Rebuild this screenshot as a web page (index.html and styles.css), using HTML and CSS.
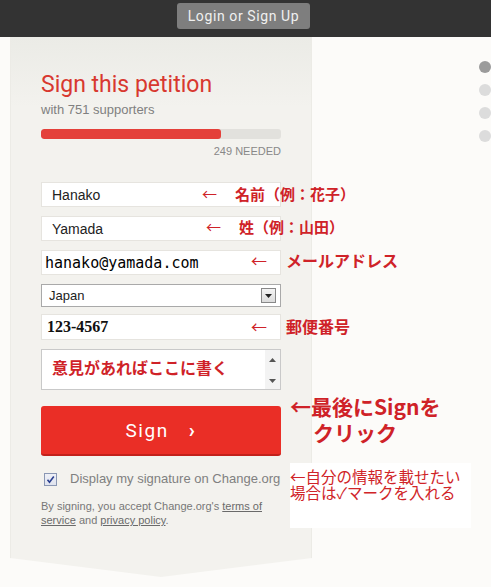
FILE: index.html
```html
<!DOCTYPE html>
<html lang="ja">
<head>
    <meta charset="UTF-8">
    <meta name="viewport" content="width=device-width, initial-scale=1.0">
    <title>Sign this petition</title>
    <link rel="stylesheet" href="styles.css">
</head>
<body>
<div class="page">
    <div class="topbar">
        <a class="login" href="#">Login or Sign Up</a>
    </div>

    <div class="main">
        <div class="panel">
            <h1>Sign this petition</h1>
            <p class="count">with 751 supporters</p>
            <div class="progress"><div class="progress-fill" style="width: 75%"></div></div>
            <p class="needed">249 NEEDED</p>

            <form class="sign-form">
                <input class="field" type="text" value="Hanako">
                <input class="field" type="text" value="Yamada">
                <input class="field field-mono" type="text" value="hanako@yamada.com">
                <div class="select">
                    <span>Japan</span>
                    <span class="select-btn">
                        <svg width="7" height="4" viewBox="0 0 7 4"><path d="M0 0h7L3.5 4z" fill="#222"/></svg>
                    </span>
                </div>
                <input class="field field-serif" type="text" value="123-4567">
                <div class="textarea">
                    <span class="note-inline">意見があればここに書く</span>
                    <span class="scroll">
                        <svg width="7" height="4" viewBox="0 0 7 4"><path d="M0 4h7L3.5 0z" fill="#555"/></svg>
                        <svg width="7" height="4" viewBox="0 0 7 4"><path d="M0 0h7L3.5 4z" fill="#555"/></svg>
                    </span>
                </div>
                <button class="sign-btn" type="button">Sign <span class="chev">›</span></button>
                <label class="display">
                    <span class="check">
                        <svg width="9" height="9" viewBox="0 0 9 9"><path d="M1.5 4.8l2 2.4L7.8 1.4" fill="none" stroke="#2a3f8f" stroke-width="1.6"/></svg>
                    </span>
                    Display my signature on Change.org
                </label>
                <p class="terms">By signing, you accept Change.org's <a href="#">terms of</a><br><a href="#">service</a> and <a href="#">privacy policy</a>.</p>
            </form>
        </div>

        <div class="dots">
            <span class="dot dot-on"></span>
            <span class="dot"></span>
            <span class="dot"></span>
            <span class="dot"></span>
        </div>
    </div>

    <!-- notes written over the screenshot -->
    <div class="note note-first"><span class="arrow">←</span>名前（例：花子）</div>
    <div class="note note-last"><span class="arrow">←</span>姓（例：山田）</div>
    <div class="note note-mail"><span class="arrow">←</span>メールアドレス</div>
    <div class="note note-zip"><span class="arrow">←</span>郵便番号</div>
    <div class="note note-sign">
        <div class="line">←最後にSignを</div>
        <div class="line indent">クリック</div>
    </div>
    <div class="note-box">
        <div class="line">←自分の情報を載せたい</div>
        <div class="line">場合は✓マークを入れる</div>
    </div>
</div>
</body>
</html>
```

FILE: styles.css
```css
body {
    margin: 0;
    background-color: #fcfbf9;
    font-family: 'Liberation Sans', Arial, sans-serif;
    color: #333;
}
.page {
    position: relative;
    width: 491px;
    height: 587px;
    overflow: hidden;
}
.topbar {
    height: 37px;
    background-color: #333;
    display: flex;
    justify-content: center;
    padding: 3px 4px 0 0;
    box-sizing: border-box;
}
.login {
    height: 26px;
    line-height: 26px;
    padding: 0 11px;
    border-radius: 3px;
    background-color: #7e7e7e;
    color: #f0f0f0;
    font-family: 'Roboto', sans-serif;
    font-size: 14px;
    letter-spacing: 0.6px;
    text-decoration: none;
}
.main {
    display: flex;
}
.panel {
    margin-left: 10px;
    width: 302px;
    height: 541px;
    box-sizing: border-box;
    padding: 34px 31px 0;
    background: linear-gradient(#ebebe6, #f3f2ee 70px);
    box-shadow: inset 1px 0 0 #ecebe6, inset -1px 0 0 #ecebe6;
    clip-path: polygon(0 0, 100% 0, 100% 521px, 50% 540px, 0 521px);
}
h1 {
    margin: 0;
    font-family: 'Roboto', sans-serif;
    font-weight: normal;
    font-size: 23px;
    line-height: 28px;
    color: #d8382f;
}
.count {
    margin: 3px 0 0;
    font-size: 13px;
    line-height: 16px;
    color: #808080;
}
.progress {
    margin-top: 11px;
    height: 10px;
    border-radius: 3px;
    background-color: #e2e1dd;
    overflow: hidden;
}
.progress-fill {
    height: 100%;
    background-color: #e4403a;
    border-radius: 3px;
}
.needed {
    margin: 5px 0 0;
    text-align: right;
    font-size: 11px;
    line-height: 14px;
    color: #888;
}
.sign-form {
    margin-top: 24px;
}
.field {
    display: block;
    width: 240px;
    height: 25px;
    margin: 0 0 9px;
    padding: 0 10px;
    box-sizing: border-box;
    border: 1px solid #e6e4df;
    background-color: #fff;
    font-family: 'Liberation Sans', Arial, sans-serif;
    font-size: 14px;
    color: #222;
    outline: none;
}
.field-mono {
    padding-left: 3px;
    font-family: 'DejaVu Sans Mono', monospace;
    font-size: 15px;
    color: #000;
}
.field-serif {
    height: 26px;
    padding-left: 5px;
    font-family: 'Liberation Serif', serif;
    font-weight: bold;
    font-size: 16px;
    color: #111;
}
.select {
    display: flex;
    align-items: center;
    justify-content: space-between;
    width: 240px;
    height: 23px;
    margin-bottom: 7px;
    padding: 0 4px 0 7px;
    box-sizing: border-box;
    border: 1px solid #a9a9a9;
    background-color: #fff;
    font-size: 13px;
    color: #222;
}
.select-btn {
    display: flex;
    align-items: center;
    justify-content: center;
    width: 15px;
    height: 15px;
    box-sizing: border-box;
    border: 1px solid #888;
    background: linear-gradient(#f4f4f4, #dcdcdc);
}
.textarea {
    display: flex;
    justify-content: space-between;
    width: 240px;
    height: 41px;
    box-sizing: border-box;
    border: 1px solid #c9c9c9;
    background-color: #fff;
}
.note-inline {
    padding: 7px 0 0 10px;
    font-family: 'Noto Sans CJK JP', sans-serif;
    font-weight: bold;
    font-size: 16px;
    line-height: 20px;
    color: #cf2228;
}
.scroll {
    display: flex;
    flex-direction: column;
    justify-content: space-between;
    align-items: center;
    width: 15px;
    padding: 8px 0 6px;
    box-sizing: border-box;
    background-color: #f3f3f3;
}
.sign-btn {
    display: block;
    width: 240px;
    height: 50px;
    margin-top: 16px;
    border: none;
    border-bottom: 2px solid #c2211b;
    border-radius: 3px;
    background-color: #ea2e26;
    color: #fff;
    font-family: 'Roboto', sans-serif;
    font-size: 19px;
    letter-spacing: 1.5px;
    cursor: pointer;
}
.chev {
    margin-left: 14px;
    font-weight: bold;
    font-size: 20px;
}
.display {
    display: flex;
    align-items: center;
    margin-top: 15px;
    padding-left: 3px;
    font-size: 13px;
    line-height: 16px;
    color: #808080;
    white-space: nowrap;
}
.check {
    display: flex;
    align-items: center;
    justify-content: center;
    flex: none;
    width: 13px;
    height: 13px;
    margin-right: 13px;
    box-sizing: border-box;
    border: 1px solid #8a97b3;
    background: linear-gradient(#eef0f6, #dfe3ee);
}
.terms {
    margin: 12px 0 0;
    font-size: 11px;
    line-height: 14px;
    color: #777;
}
.terms a {
    color: #6a6a6a;
}
.dots {
    margin-left: auto;
    margin-right: 0;
    padding-top: 24px;
    display: flex;
    flex-direction: column;
    gap: 11px;
    width: 12px;
}
.dot {
    width: 12px;
    height: 12px;
    border-radius: 50%;
    background-color: #dcdcdc;
}
.dot-on {
    background-color: #9b9b9b;
}
.note {
    position: absolute;
    font-family: 'Noto Sans CJK JP', sans-serif;
    font-weight: bold;
    font-size: 15px;
    line-height: 20px;
    color: #cf2228;
    white-space: nowrap;
}
.arrow {
    display: inline-block;
    font-weight: normal;
    margin-right: 18px;
}
.note-first {
    left: 202px;
    top: 184px;
}
.note-last {
    left: 206px;
    top: 217px;
}
.note-mail {
    left: 251px;
    top: 250px;
    font-size: 16px;
}
.note-mail .arrow,
.note-zip .arrow {
    margin-right: 19px;
}
.note-zip {
    left: 251px;
    top: 316px;
    font-size: 16px;
}
.note-sign {
    left: 290px;
    top: 393px;
    font-size: 21px;
}
.note-sign .line {
    height: 26px;
    line-height: 26px;
}
.indent {
    padding-left: 23px;
}
.note-box {
    position: absolute;
    left: 290px;
    top: 463px;
    width: 181px;
    height: 65px;
    background-color: #fff;
    font-family: 'Noto Sans CJK JP', sans-serif;
    font-size: 15.5px;
    padding-top: 5px;
    box-sizing: border-box;
    color: #d02428;
    white-space: nowrap;
}
.note-box .line {
    height: 16px;
    line-height: 16px;
}
```
